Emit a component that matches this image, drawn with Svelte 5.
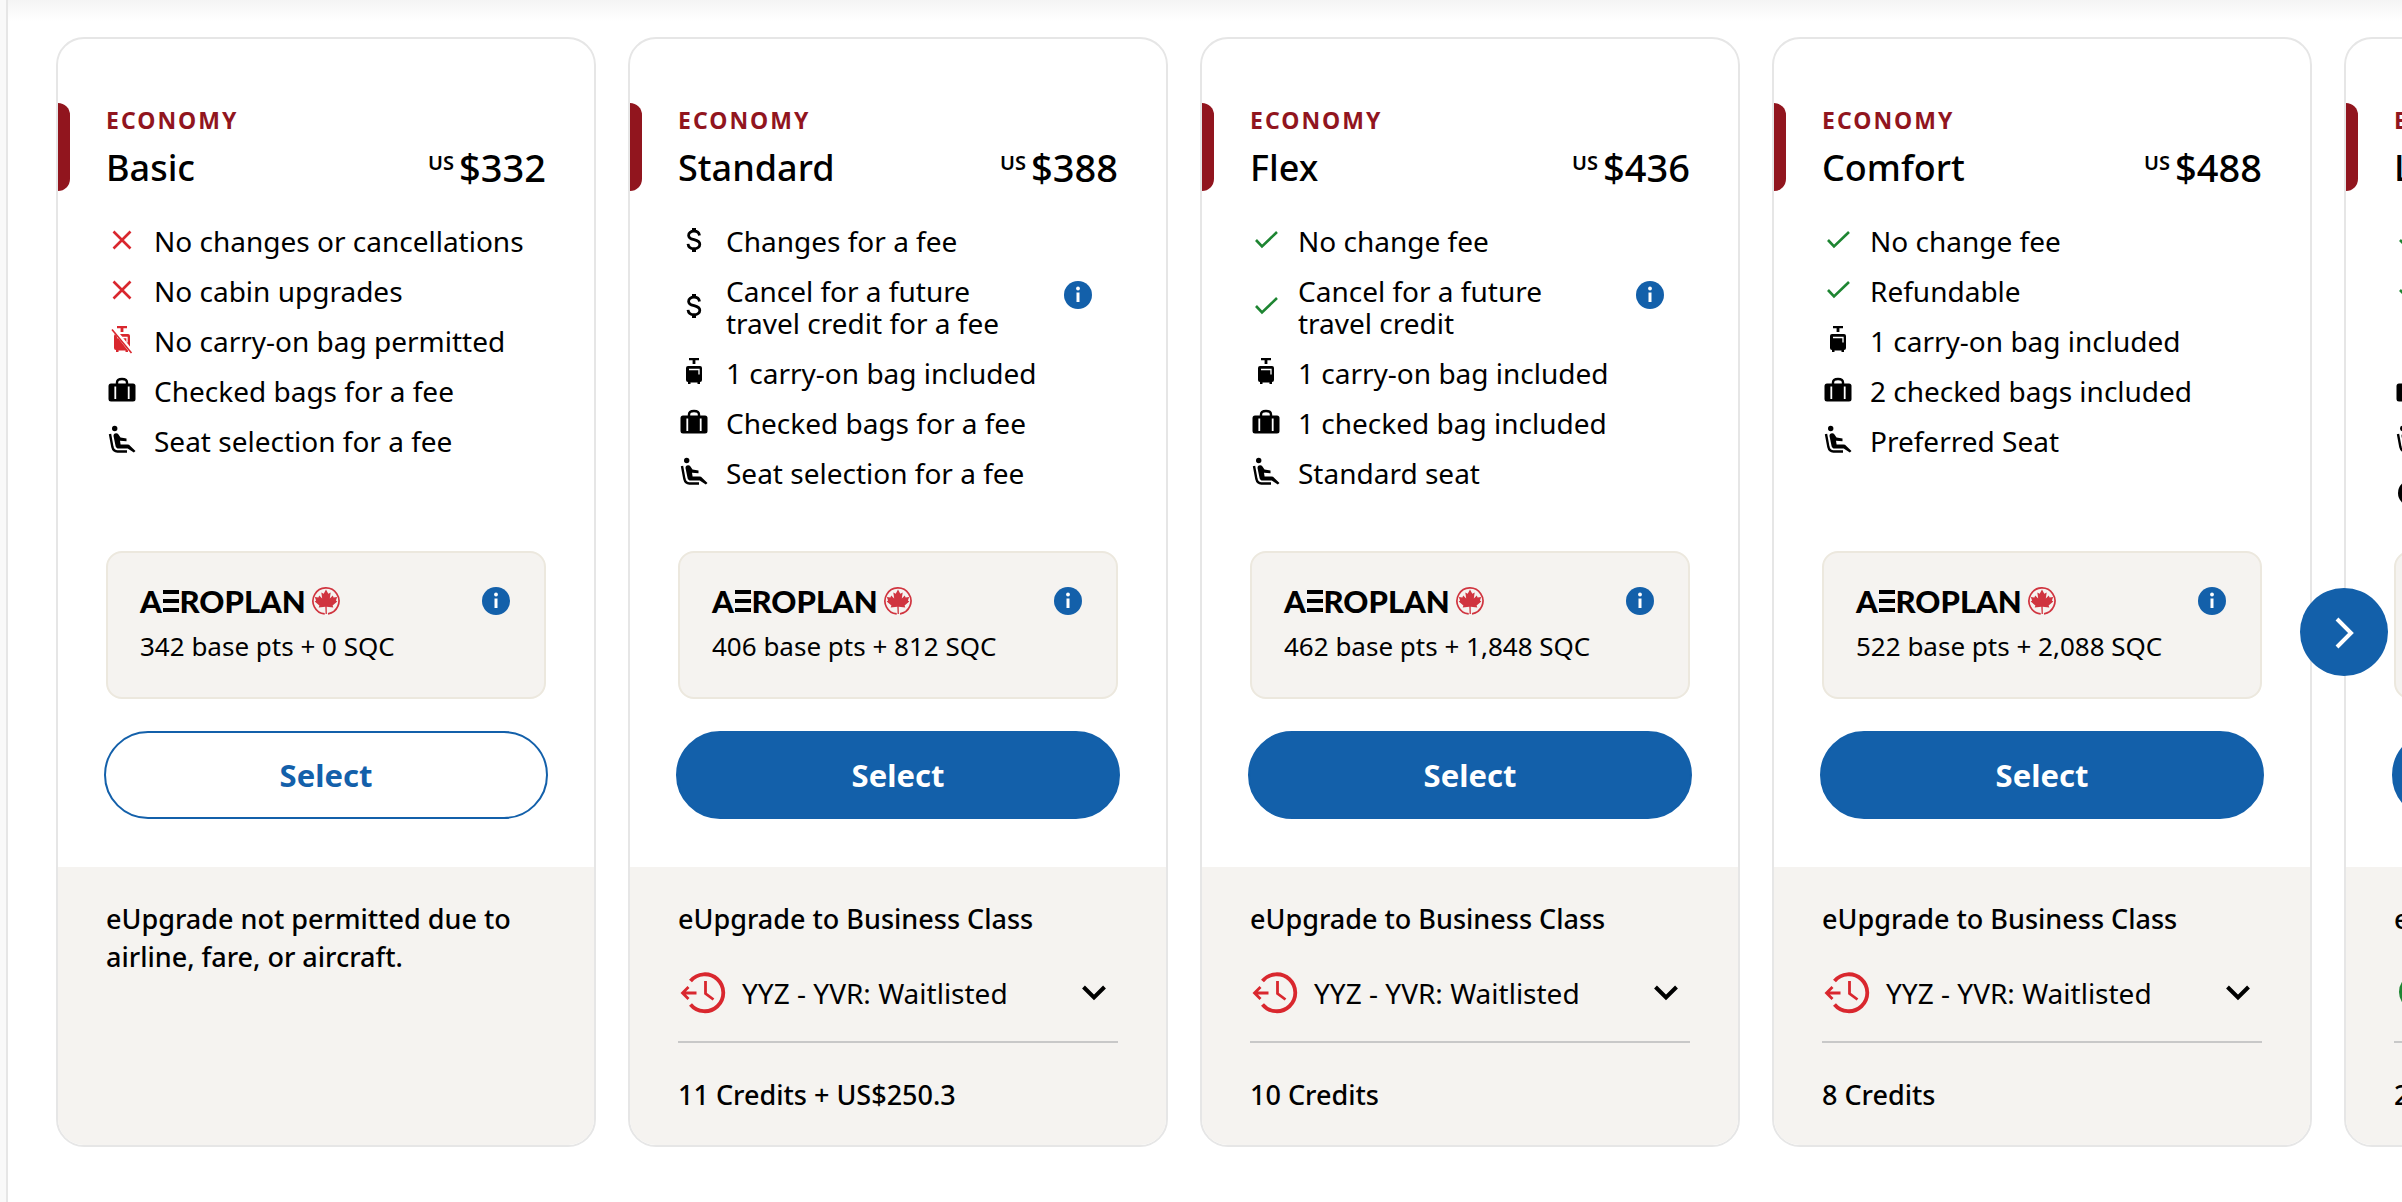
<script>
  const fares = [
    {
      name: 'Basic',
      price: '$332',
      features: [
        { icon: 'cross', text: 'No changes or cancellations' },
        { icon: 'cross', text: 'No cabin upgrades' },
        { icon: 'nocarry', text: 'No carry-on bag permitted' },
        { icon: 'bag', text: 'Checked bags for a fee' },
        { icon: 'seat', text: 'Seat selection for a fee' }
      ],
      points: '342 base pts + 0 SQC',
      outline: true
    },
    {
      name: 'Standard',
      price: '$388',
      features: [
        { icon: 'dollar', text: 'Changes for a fee' },
        { icon: 'dollar', text: 'Cancel for a future travel credit for a fee', info: true },
        { icon: 'carry', text: '1 carry-on bag included' },
        { icon: 'bag', text: 'Checked bags for a fee' },
        { icon: 'seat', text: 'Seat selection for a fee' }
      ],
      points: '406 base pts + 812 SQC',
      status: 'Waitlisted',
      credits: '11 Credits + US$250.3'
    },
    {
      name: 'Flex',
      price: '$436',
      features: [
        { icon: 'check', text: 'No change fee' },
        { icon: 'check', text: 'Cancel for a future travel credit', info: true },
        { icon: 'carry', text: '1 carry-on bag included' },
        { icon: 'bag', text: '1 checked bag included' },
        { icon: 'seat', text: 'Standard seat' }
      ],
      points: '462 base pts + 1,848 SQC',
      status: 'Waitlisted',
      credits: '10 Credits'
    },
    {
      name: 'Comfort',
      price: '$488',
      features: [
        { icon: 'check', text: 'No change fee' },
        { icon: 'check', text: 'Refundable' },
        { icon: 'carry', text: '1 carry-on bag included' },
        { icon: 'bag', text: '2 checked bags included' },
        { icon: 'seat', text: 'Preferred Seat' }
      ],
      points: '522 base pts + 2,088 SQC',
      status: 'Waitlisted',
      credits: '8 Credits'
    },
    {
      name: 'L',
      features: [
        { icon: 'check' },
        { icon: 'check' },
        { icon: 'carry' },
        { icon: 'bag' },
        { icon: 'seat' },
        { icon: 'priority' }
      ],
      available: true,
      credits: '2'
    }
  ];
</script>

{#snippet featureIcon(name)}
  <svg class="feature-icon {name}" viewBox="0 0 32 32" aria-hidden="true">
    {#if name === 'cross'}
      <path d="M7.500 6.500l17 17M24.500 6.500l-17 17" fill="none" stroke="currentColor" stroke-width="2.600" />
    {:else if name === 'check'}
      <path d="M6 15l6 6.500L27 7" fill="none" stroke="currentColor" stroke-width="2.600" />
    {:else if name === 'dollar'}
      <path d="M21.500 10.500c-.5-3-2.500-4.300-5.500-4.300-3.200 0-5.400 1.600-5.400 4.200 0 5.800 11.200 2.800 11.200 8.800 0 2.700-2.300 4.500-5.800 4.500-3.300 0-5.600-1.500-6-4.900" fill="none" stroke="currentColor" stroke-width="2.800" />
      <path d="M14 3h4v4h-4zM14 23h4v4h-4z" />
    {:else if name === 'carry' || name === 'nocarry'}
      <path d="M11 1h10v2.200h-3.600V7h-2.800V3.200H11z" />
      <path d="M10 9h12q2 0 2 2v12q0 2-2 2v2h-2.500v-1.500h-7V27H10v-2q-2 0-2-2V11q0-2 2-2z" />
      <path d="M11 12.500h10v5" fill="none" stroke="#fff" stroke-width="1.300" />
      {#if name === 'nocarry'}
        <path d="M7.500 4l19 24" stroke="#fff" stroke-width="4" />
        <path d="M6 4.500l19.500 23.500" stroke="currentColor" stroke-width="1.600" />
      {/if}
    {:else if name === 'bag'}
      <path d="M5 8.500h22q2.500 0 2.500 2.500v13q0 2.500-2.500 2.500H5q-2.500 0-2.500-2.500V11q0-2.500 2.500-2.500z" />
      <path d="M11 9V7.500Q11 4 16 4t5 3.500V9" fill="none" stroke="currentColor" stroke-width="2.400" />
      <path d="M9.300 11.500v12.500M22.700 11.500v12.500" stroke="#fff" stroke-width="1.800" />
    {:else if name === 'seat'}
      <circle cx="8.700" cy="3.500" r="2.700" />
      <path d="M4 9l2.400 13.100q1 4.400 5 4.400h9.600" fill="none" stroke="currentColor" stroke-width="2.400" />
      <path d="M7.500 11q0-2.700 2.600-2.700 1.600 0 2.400 1.200l2 3 6 1v2.700l-6.500-.4.600 3.800h6.900q1.700 0 2.800 1.300l5.200 5-1.700 1.700-6.100-4H12.700q-2.700 0-3.200-2.800z" />
    {:else}
      <circle cx="17" cy="18" r="13" />
      <path d="M12 18l4 5 8-10" fill="none" stroke="#fff" stroke-width="2.500" />
    {/if}
  </svg>
{/snippet}

{#snippet info()}
  <button class="info" aria-label="More information">
    <svg viewBox="0 0 28 28" aria-hidden="true">
      <circle cx="14" cy="14" r="14" />
      <circle cx="14" cy="7.500" r="1.900" fill="#fff" />
      <path d="M12.500 11.500h3V21h-3z" fill="#fff" />
    </svg>
  </button>
{/snippet}

<main class="fares">
  <div class="cards">
    {#each fares as fare}
      <article class="card">
        <div class="offer">
          <header class="heading">
            <div class="cabin">ECONOMY</div>
            <div class="title-row">
              <h2>{fare.name}</h2>
              {#if fare.price}
                <div class="price"><span class="currency">US</span>{fare.price}</div>
              {/if}
            </div>
          </header>

          <ul class="features">
            {#each fare.features as feature}
              <li>
                {@render featureIcon(feature.icon)}
                {#if feature.text}
                  <span class="feature-text">{feature.text}</span>
                {/if}
                {#if feature.info}
                  {@render info()}
                {/if}
              </li>
            {/each}
          </ul>

          <section class="aeroplan">
            {#if fare.points}
              <div class="brand-row">
                <span class="brand">A<span class="brand-e">E</span>ROPLAN</span>
                <svg class="leaf" viewBox="0 0 30 30" aria-hidden="true">
                  <path d="M13.700 27.900A13 13 0 1 1 17 27.800" fill="none" stroke="currentColor" stroke-width="1.700" />
                  <path d="M15 3.500l2.300 4.300 2.400-1.200-.9 5.800 3-2.800.8 2 3.600-.6-1.300 3.600 1.400 1-4.700 3.800.7 2.200-6.600-.8.200 7.200h-1.300l-.3-7.200-6.600.8.700-2.200-4.700-3.800 1.400-1-1.300-3.600 3.600.6.800-2 3 2.800-.9-5.800 2.400 1.200z" />
                </svg>
                {@render info()}
              </div>
              <div class="points">{fare.points}</div>
            {/if}
          </section>

          <button class="select" class:outline={fare.outline}>
            {#if fare.price}Select{/if}
          </button>
        </div>

        <footer class="upgrade">
          {#if fare.status}
            <h3>eUpgrade to Business Class</h3>
          {:else if fare.available}
            <h3>e</h3>
          {:else}
            <h3>eUpgrade not permitted due to airline, fare, or aircraft.</h3>
          {/if}
          {#if fare.credits}
            <button class="segment" aria-label={fare.status ? null : 'Upgrade details'}>
              <svg class="clock" class:available={fare.available} viewBox="0 0 48 44" aria-hidden="true">
                {#if fare.available}
                  <circle cx="24" cy="21" r="17" fill="none" stroke="currentColor" stroke-width="4" />
                  <path d="M17 21l6 6 11-12" fill="none" stroke="currentColor" stroke-width="3" />
                {:else}
                  <path d="M12.500 10A18.500 18.500 0 1 1 12.500 33.500" fill="none" stroke="currentColor" stroke-width="3.800" />
                  <path d="M27.500 10v12.500l8 6M18.500 22H4.500M10.500 16L4.500 22l6 6" fill="none" stroke="currentColor" stroke-width="2.800" />
                {/if}
              </svg>
              {#if fare.status}
                <span>YYZ - YVR: {fare.status}</span>
                <svg class="chevron" viewBox="0 0 24 16" aria-hidden="true">
                  <path d="M1.500 2L12 12.500 22.500 2" fill="none" stroke="#000" stroke-width="4" />
                </svg>
              {/if}
            </button>
            <div class="credits">{fare.credits}</div>
          {/if}
        </footer>
      </article>
    {/each}
  </div>

  <button class="next" aria-label="Next fares">
    <svg viewBox="0 0 88 88" aria-hidden="true">
      <path d="M37 31l14 14-14 14" fill="none" stroke="#fff" stroke-width="4" />
    </svg>
  </button>
</main>

<style>
  :global(body) {
    margin: 0;
    background: #f9f9f9;
  }

  .fares {
    --blue: #1360aa;
    --red: #d9272e;
    --maroon: #91151e;
    --green: #1e8532;
    --sand: #f5f3f0;
    --line: #e6e6e6;
    position: relative;
    min-height: 100vh;
    box-sizing: border-box;
    margin-left: 6px;
    padding: 37px 0 55px 48px;
    border-left: 2px solid var(--line);
    background: linear-gradient(#f4f4f4, #fff 22px);
    overflow: hidden;
    color: #000;
    font-family: "Noto Sans", "Open Sans", sans-serif;
    font-size: 28px;
    line-height: 32px;
  }

  button {
    font: inherit;
    color: inherit;
    border: 0;
    padding: 0;
    cursor: pointer;
  }

  svg {
    display: block;
    fill: currentColor;
  }

  h2,
  h3 {
    margin: 0;
    font-weight: 500;
  }

  .cards {
    display: flex;
    gap: 32px;
  }

  .card {
    flex: 0 0 540px;
    box-sizing: border-box;
    display: flex;
    flex-direction: column;
    border: 2px solid var(--line);
    border-radius: 28px;
    background: #fff;
    overflow: hidden;
  }

  .offer {
    display: flex;
    flex-direction: column;
    height: 828px;
    box-sizing: border-box;
    padding: 64px 48px 48px;
  }

  .heading {
    position: relative;
    height: 88px;
    margin-left: -48px;
    padding-left: 48px;
  }

  .heading::before {
    content: '';
    position: absolute;
    inset: 0 auto 0 0;
    width: 12px;
    border-radius: 0 12px 12px 0;
    background: var(--maroon);
  }

  .cabin {
    padding-top: 1px;
    color: var(--maroon);
    font-size: 23px;
    font-weight: 700;
    letter-spacing: 2px;
  }

  .title-row {
    display: flex;
    justify-content: space-between;
    margin-top: 10px;
    font-weight: 500;
    line-height: 44px;
  }

  h2 {
    font-size: 36px;
  }

  .price {
    display: flex;
    gap: 5px;
    font-size: 38px;
    line-height: 42px;
  }

  .currency {
    font-size: 20px;
    font-weight: 600;
    line-height: 34px;
  }

  .features {
    display: flex;
    flex-direction: column;
    gap: 18px;
    margin: 34px 0 auto;
    padding: 0;
    list-style: none;
  }

  .features li {
    display: flex;
    align-items: center;
    min-height: 32px;
  }

  .feature-icon {
    flex: 0 0 32px;
    height: 32px;
    margin-right: 16px;
  }

  .cross,
  .nocarry {
    color: var(--red);
  }

  .check {
    color: var(--green);
  }

  li:has(.info) .feature-text {
    width: 290px;
  }

  .info {
    width: 28px;
    height: 28px;
    margin-left: auto;
    background: none;
    color: var(--blue);
  }

  li .info {
    align-self: flex-start;
    margin-top: 6px;
    margin-right: 26px;
  }

  .aeroplan {
    box-sizing: border-box;
    height: 148px;
    padding: 34px 34px 34px 32px;
    border: 2px solid #ece8de;
    border-radius: 16px;
    background: var(--sand);
  }

  .brand-row {
    display: flex;
    align-items: center;
    height: 28px;
  }

  .brand {
    font-family: Lato, sans-serif;
    font-size: 31px;
    font-weight: 900;
    line-height: 30px;
  }

  /* the logo draws its E as three bars */
  .brand-e {
    color: transparent;
    background: linear-gradient(#000 0 4px, transparent 4px 9px, #000 9px 13px, transparent 13px 18px, #000 18px) center / 16px 22px no-repeat;
  }

  .leaf {
    width: 30px;
    height: 30px;
    margin-left: 5px;
    color: #d0343f;
  }

  .points {
    margin-top: 15px;
    font-size: 26px;
  }

  .select {
    height: 88px;
    margin: 32px -2px 0;
    border: 2px solid var(--blue);
    border-radius: 44px;
    background: var(--blue);
    color: #fff;
    font-size: 31px;
    font-weight: 700;
  }

  .select.outline {
    background: #fff;
    color: var(--blue);
  }

  .upgrade {
    flex: 1;
    padding: 33px 48px 34px;
    background: var(--sand);
    font-size: 27px;
    font-weight: 500;
  }

  h3 {
    font-size: 27px;
    line-height: 38px;
  }

  .segment {
    display: flex;
    align-items: center;
    width: 100%;
    height: 98px;
    margin-top: 7px;
    border-bottom: 2px solid #c8c8c8;
    background: none;
    font-size: 28px;
    font-weight: 400;
  }

  .clock {
    flex: 0 0 48px;
    height: 44px;
    margin-right: 16px;
    color: var(--red);
  }

  .clock.available {
    color: var(--green);
  }

  .chevron {
    width: 24px;
    height: 16px;
    margin: 0 12px 0 auto;
  }

  .credits {
    margin-top: 36px;
  }

  .next {
    position: absolute;
    top: 588px;
    right: 14px;
    width: 88px;
    height: 88px;
    border-radius: 50%;
    background: var(--blue);
  }
</style>
